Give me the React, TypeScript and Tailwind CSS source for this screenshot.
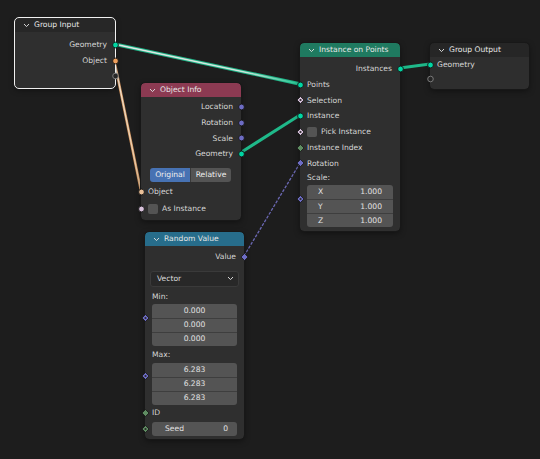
import React from 'react';

type Shape = 'circle' | 'hollow' | 'diamond' | 'diamondDot';

const GEO = '#00d6a3';
const OBJ = '#ed9e5c';
const VEC = '#6d6cc4';
const BOOL = '#d8c2dc';
const INT = '#5f8c62';

function Socket({ shape, color = '#888', side }: { shape: Shape; color?: string; side: 'in' | 'out' }) {
  return (
    <svg
      width="9"
      height="9"
      viewBox="0 0 9 9"
      className={`absolute top-1/2 -translate-y-1/2 ${side === 'in' ? '-left-[4.5px]' : '-right-[4.5px]'}`}
    >
      {shape === 'circle' && <circle cx="4.5" cy="4.5" r="2.9" fill={color} stroke="#151515" strokeWidth="0.9" />}
      {shape === 'hollow' && <circle cx="4.5" cy="4.5" r="2.8" fill="#262626" stroke="#7a7a7a" strokeWidth="1" />}
      {shape === 'diamond' && (
        <polygon points="4.5,1 8,4.5 4.5,8 1,4.5" fill={color} stroke="#151515" strokeWidth="0.8" />
      )}
      {shape === 'diamondDot' && (
        <>
          <polygon points="4.5,1 8,4.5 4.5,8 1,4.5" fill={color} stroke="#151515" strokeWidth="0.8" />
          <circle cx="4.5" cy="4.5" r="1.1" fill="#2a2a2a" />
        </>
      )}
    </svg>
  );
}

function Chevron() {
  return (
    <svg width="7" height="5" viewBox="0 0 7 5" className="shrink-0">
      <polyline points="1,1 3.5,3.6 6,1" fill="none" stroke="#d8d8d8" strokeWidth="1" />
    </svg>
  );
}

function Node({
  pos,
  title,
  header,
  body = 'bg-[#2f2f2f]',
  selected,
  children,
}: {
  pos: string;
  title: string;
  header: string;
  body?: string;
  selected?: boolean;
  children: React.ReactNode;
}) {
  return (
    <div
      className={`absolute rounded-[4px] ${body} ${pos} ${
        selected ? 'outline outline-1 outline-[#f0f0f0]' : 'outline outline-1 outline-[#181818]'
      } shadow-[0_2px_6px_rgba(0,0,0,0.45)]`}
    >
      <div className={`flex h-[14px] items-center gap-[4px] rounded-t-[4px] pl-[8px] text-[#e6e6e6] ${header}`}>
        <Chevron />
        <span className="leading-none">{title}</span>
      </div>
      {children}
    </div>
  );
}

function Row({
  label,
  side,
  shape,
  color,
  h = 'h-[15.75px]',
  children,
}: {
  label?: string;
  side: 'in' | 'out';
  shape?: Shape;
  color?: string;
  h?: string;
  children?: React.ReactNode;
}) {
  return (
    <div
      className={`relative flex items-center ${h} ${side === 'out' ? 'justify-end pr-[8px]' : 'pl-[7px]'}`}
    >
      {children}
      {label && <span className="leading-none">{label}</span>}
      {shape && <Socket shape={shape} color={color} side={side} />}
    </div>
  );
}

function Check() {
  return <div className="mr-[4px] h-[10px] w-[10px] rounded-[2px] bg-[#545454]" />;
}

function Fields({ values, labels }: { values: string[]; labels?: string[] }) {
  return (
    <div className="overflow-hidden rounded-[3px] bg-[#545454]">
      {values.map((v, i) => (
        <div
          key={i}
          className={`flex h-[14px] items-center text-[#e2e2e2] ${
            labels ? 'justify-between pl-[11px] pr-[11px]' : 'justify-center'
          } ${i > 0 ? 'border-t border-[#3e3e3e]' : ''}`}
        >
          {labels && <span className="leading-none">{labels[i]}</span>}
          <span className="leading-none">{v}</span>
        </div>
      ))}
    </div>
  );
}

function Links() {
  return (
    <svg width="540" height="459" className="pointer-events-none absolute left-0 top-0">
      <defs>
        <linearGradient id="g1" x1="114" y1="44" x2="300" y2="84" gradientUnits="userSpaceOnUse">
          <stop offset="0" stopColor="#e6e6e6" />
          <stop offset="0.7" stopColor="#cfe6dc" />
          <stop offset="1" stopColor="#22c592" />
        </linearGradient>
        <linearGradient id="g2" x1="114" y1="59" x2="141" y2="191" gradientUnits="userSpaceOnUse">
          <stop offset="0" stopColor="#f0e4d4" />
          <stop offset="1" stopColor="#e8c49c" />
        </linearGradient>
      </defs>
      <line x1="114" y1="44" x2="300" y2="84" stroke="#1fb487" strokeWidth="3.4" strokeLinecap="round" />
      <line x1="114" y1="44" x2="300" y2="84" stroke="url(#g1)" strokeWidth="1.6" strokeLinecap="round" />
      <line x1="114" y1="59" x2="141" y2="191" stroke="#c98a54" strokeWidth="2.6" strokeLinecap="round" />
      <line x1="114" y1="59" x2="141" y2="191" stroke="url(#g2)" strokeWidth="1.3" strokeLinecap="round" />
      <line x1="240" y1="153" x2="300" y2="115" stroke="#1fb98a" strokeWidth="3" strokeLinecap="round" />
      <line x1="400" y1="68" x2="430" y2="64" stroke="#1fb98a" strokeWidth="3" strokeLinecap="round" />
      <line
        x1="244"
        y1="256"
        x2="300"
        y2="163"
        stroke="#7471c4"
        strokeWidth="1.3"
        strokeDasharray="3 1.4"
        opacity="0.9"
      />
    </svg>
  );
}

export default function App() {
  return (
    <div
      className="relative h-[459px] w-[540px] overflow-hidden bg-[#1d1d1d] text-[7.6px] text-[#d6d6d6]"
      style={{ fontFamily: '"DejaVu Sans", "Liberation Sans", sans-serif' }}
    >
      <Links />

      {/* Group Input */}
      <Node pos="left-[15px] top-[18px] w-[100px]" title="Group Input" header="bg-[#272727]" selected>
        <div className="pb-[4px] pt-[5px]">
          <Row label="Geometry" side="out" shape="circle" color={GEO} />
          <Row label="Object" side="out" shape="circle" color={OBJ} />
          <Row side="out" shape="hollow" />
        </div>
      </Node>

      {/* Object Info */}
      <Node pos="left-[141px] top-[83px] w-[100px]" title="Object Info" header="bg-[#8c3a52]">
        <div className="pb-[2px] pt-[2px]">
          <Row label="Location" side="out" shape="circle" color={VEC} />
          <Row label="Rotation" side="out" shape="circle" color={VEC} />
          <Row label="Scale" side="out" shape="circle" color={VEC} />
          <Row label="Geometry" side="out" shape="circle" color={GEO} />
          <div className="ml-[9px] mt-[6px] flex h-[14px] w-[81px] overflow-hidden rounded-[3px] text-[#f0f0f0]">
            <div className="flex w-[40px] items-center justify-center bg-[#4772b3]">Original</div>
            <div className="flex flex-1 items-center justify-center border-l border-[#3a3a3a] bg-[#545454]">
              Relative
            </div>
          </div>
          <div className="mt-[2px]">
            <Row label="Object" side="in" shape="circle" color="#e8bf98" h="h-[16.5px]" />
            <Row label="As Instance" side="in" shape="circle" color={BOOL} h="h-[17px]">
              <Check />
            </Row>
          </div>
        </div>
      </Node>

      {/* Instance on Points */}
      <Node pos="left-[300px] top-[43px] w-[100px]" title="Instance on Points" header="bg-[#1f7a60]">
        <div className="pb-[4px] pt-[4px]">
          <Row label="Instances" side="out" shape="circle" color={GEO} />
          <Row label="Points" side="in" shape="circle" color={GEO} />
          <Row label="Selection" side="in" shape="diamondDot" color={BOOL} />
          <Row label="Instance" side="in" shape="circle" color={GEO} />
          <Row label="Pick Instance" side="in" shape="diamondDot" color={BOOL}>
            <Check />
          </Row>
          <Row label="Instance Index" side="in" shape="diamond" color={INT} />
          <Row label="Rotation" side="in" shape="diamond" color={VEC} />
          <div className="relative pl-[7px] pr-[7px]">
            <div className="flex h-[13px] items-center leading-none">Scale:</div>
            <div className="mt-[1px]">
              <Fields values={['1.000', '1.000', '1.000']} labels={['X', 'Y', 'Z']} />
            </div>
            <Socket shape="diamondDot" color={VEC} side="in" />
          </div>
        </div>
      </Node>

      {/* Group Output */}
      <Node pos="left-[430px] top-[43px] w-[99px]" title="Group Output" header="bg-[#262626]" body="bg-[#2e2e2e]">
        <div className="pb-[3px]">
          <Row label="Geometry" side="in" shape="circle" color={GEO} />
          <Row side="in" shape="hollow" h="h-[13px]" />
        </div>
      </Node>

      {/* Random Value */}
      <Node pos="left-[145px] top-[232px] w-[99px]" title="Random Value" header="bg-[#276d8b]">
        <div className="pb-[3px] pt-[3px]">
          <Row label="Value" side="out" shape="diamond" color={VEC} />
          <div className="mx-[5px] mt-[6px] flex h-[16px] items-center justify-between rounded-[3px] border border-[#3a3a3a] bg-[#282828] pl-[6px] pr-[4px] text-[#dcdcdc]">
            <span className="leading-none">Vector</span>
            <Chevron />
          </div>
          <div className="relative mt-[3px] px-[7px]">
            <div className="flex h-[14px] items-center leading-none">Min:</div>
            <Fields values={['0.000', '0.000', '0.000']} />
            <Socket shape="diamondDot" color={VEC} side="in" />
          </div>
          <div className="relative mt-[2px] px-[7px]">
            <div className="flex h-[15px] items-center leading-none">Max:</div>
            <Fields values={['6.283', '6.283', '6.283']} />
            <Socket shape="diamondDot" color={VEC} side="in" />
          </div>
          <Row label="ID" side="in" shape="diamond" color={INT} h="h-[16px]" />
          <div className="relative mt-[1px] px-[7px]">
            <div className="flex h-[14px] items-center justify-between rounded-[3px] bg-[#545454] pl-[13px] pr-[9px] text-[#e2e2e2]">
              <span className="leading-none">Seed</span>
              <span className="leading-none">0</span>
            </div>
            <Socket shape="diamondDot" color={INT} side="in" />
          </div>
        </div>
      </Node>
    </div>
  );
}
